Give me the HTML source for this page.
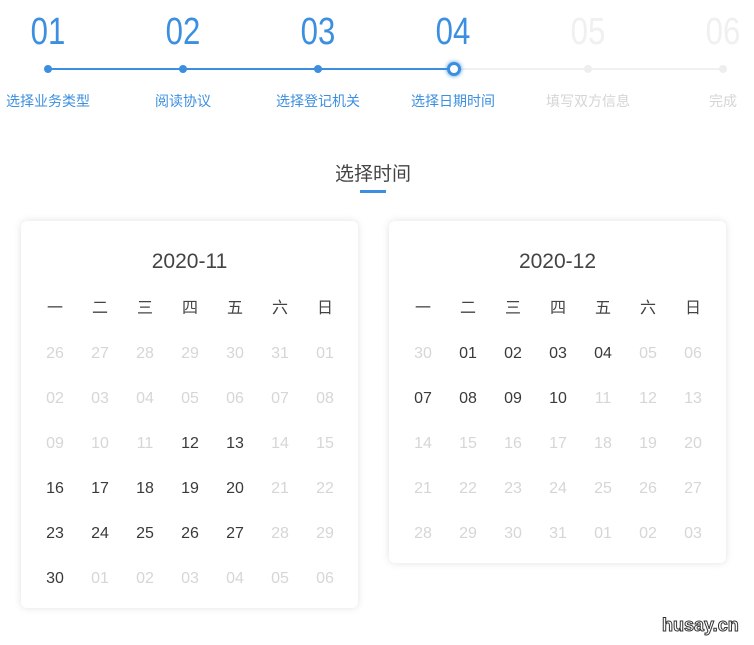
<!DOCTYPE html>
<html><head><meta charset="utf-8"><style>
body{margin:0;width:754px;height:645px;background:#fff;font-family:"Liberation Sans","Noto Sans CJK SC",sans-serif;position:relative;overflow:hidden}
.a{position:absolute;white-space:nowrap;transform:translateX(-50%)}
.num{font-size:38px;top:10px;font-weight:300;line-height:44px;transform:translateX(-50%) scaleX(0.82)}
.lbl{font-size:14px;top:91px;line-height:20px}
.b{color:#3c8fe0}.g{color:#d5d5d5}
.dot{position:absolute;width:8px;height:8px;border-radius:50%;top:65px;margin-left:-4px}
.card{position:absolute;top:221px;width:337px;background:#fff;border-radius:6px;box-shadow:0 0 8px rgba(0,0,0,.12)}
.card h3{margin:0;position:absolute;top:29px;width:100%;text-align:center;font-weight:400;font-size:21px;color:#444}
.c{position:absolute;width:40px;margin-left:-20px;text-align:center;font-size:16px;line-height:20px}
.d{color:#3a3a3a}.o{color:#d6d6d6}.w{color:#444}
</style></head><body>
<div style="position:absolute;left:48px;top:68px;width:405px;height:2px;background:#3c8fe0"></div>
<div style="position:absolute;left:453px;top:68px;width:270px;height:2px;background:#f0f0f0"></div>
<div class="dot" style="left:48px;background:#3c8fe0"></div>
<div class="dot" style="left:183px;background:#3c8fe0"></div>
<div class="dot" style="left:318px;background:#3c8fe0"></div>
<div style="position:absolute;left:447px;top:62px;width:8px;height:8px;border:3px solid #3c8fe0;border-radius:50%;background:#fff;box-shadow:0 0 4px #3c8fe0"></div>
<div class="dot" style="left:588px;background:#eee"></div>
<div class="dot" style="left:723px;background:#eee"></div>
<div class="a num b" style="left:48px">01</div>
<div class="a num b" style="left:183px">02</div>
<div class="a num b" style="left:318px">03</div>
<div class="a num b" style="left:453px">04</div>
<div class="a num" style="left:588px;color:#f0f0f0">05</div>
<div class="a num" style="left:723px;color:#f0f0f0">06</div>
<div class="a lbl b" style="left:48px">选择业务类型</div>
<div class="a lbl b" style="left:183px">阅读协议</div>
<div class="a lbl b" style="left:318px">选择登记机关</div>
<div class="a lbl b" style="left:453px">选择日期时间</div>
<div class="a lbl g" style="left:588px">填写双方信息</div>
<div class="a lbl g" style="left:723px">完成</div>
<div class="a" style="left:373px;top:162px;font-size:19px;color:#444;line-height:26px">选择时间</div>
<div style="position:absolute;left:360px;top:190px;width:26px;height:3px;background:#3c8fe0"></div>
<div class="card" style="left:21px;height:387px" id="c1"><h3>2020-11</h3></div>
<div class="card" style="left:389px;height:342px" id="c2"><h3>2020-12</h3></div>
<div style="position:absolute;left:662px;top:615px;font:bold 18px 'Liberation Sans',sans-serif;color:#fff;-webkit-text-stroke:1px #333;letter-spacing:0px">husay.cn</div>
<script>
function fill(id,cells){var c=document.getElementById(id),w="一二三四五六日";
for(var i=0;i<7;i++){var e=document.createElement('div');e.className='c w';e.style.left=(34+45*i)+'px';e.style.top='78px';e.textContent=w[i];c.appendChild(e);}
cells.forEach(function(x,k){var e=document.createElement('div');e.className='c '+(x[1]?'d':'o');e.style.left=(34+45*(k%7))+'px';e.style.top=(123+45*Math.floor(k/7))+'px';e.textContent=x[0];c.appendChild(e);});}
function p(n){return (n<10?'0':'')+n}
var a=[];[26,27,28,29,30,31].forEach(function(n){a.push([n,0])});for(var i=1;i<=30;i++)a.push([p(i),i>=12&&i<=13||i>=16&&i<=20||i>=23&&i<=27||i==30?1:0]);for(i=1;i<=6;i++)a.push([p(i),0]);
fill('c1',a);
var b=[[30,0]];for(i=1;i<=31;i++)b.push([p(i),(i>=1&&i<=4)||(i>=7&&i<=10)?1:0]);for(i=1;i<=3;i++)b.push([p(i),0]);
fill('c2',b);
</script>
</body></html>
